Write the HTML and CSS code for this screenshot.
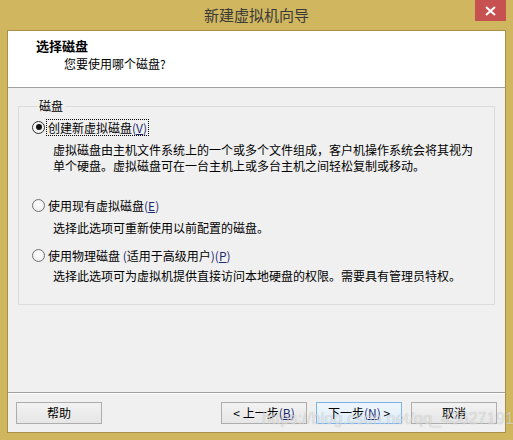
FILE: index.html
```html
<!DOCTYPE html>
<html lang="zh-CN">
<head>
    <meta charset="UTF-8">
    <title>新建虚拟机向导</title>
    <link rel="stylesheet" href="styles.css">
</head>
<body>
    <div class="window">
        <div class="titlebar">
            <span></span>
            <div class="title">新建虚拟机向导</div>
            <div class="close">
                <svg width="11" height="10" viewBox="0 0 11 10"><path d="M1 1 L10 9 M10 1 L1 9" stroke="#fff" stroke-width="2"/></svg>
            </div>
        </div>
        <div class="client">
            <div class="header">
                <div class="header-title">选择磁盘</div>
                <div class="header-sub">您要使用哪个磁盘?</div>
            </div>
            <div class="content">
                <fieldset class="group">
                    <legend>磁盘</legend>
                    <div class="option first">
                        <div class="option-row">
                            <span class="radio checked"></span>
                            <span class="label focus">创建新虚拟磁盘<span class="key">(<u>V</u>)</span></span>
                        </div>
                        <div class="desc tall">虚拟磁盘由主机文件系统上的一个或多个文件组成，客户机操作系统会将其视为<br>单个硬盘。虚拟磁盘可在一台主机上或多台主机之间轻松复制或移动。</div>
                    </div>
                    <div class="option">
                        <div class="option-row">
                            <span class="radio"></span>
                            <span class="label">使用现有虚拟磁盘<span class="key">(<u>E</u>)</span></span>
                        </div>
                        <div class="desc">选择此选项可重新使用以前配置的磁盘。</div>
                    </div>
                    <div class="option last">
                        <div class="option-row">
                            <span class="radio"></span>
                            <span class="label">使用物理磁盘 <span class="key">(</span>适用于高级用户<span class="key">)(<u>P</u>)</span></span>
                        </div>
                        <div class="desc">选择此选项可为虚拟机提供直接访问本地硬盘的权限。需要具有管理员特权。</div>
                    </div>
                </fieldset>
            </div>
            <div class="footer">
                <button class="btn">帮助</button>
                <div class="spacer"></div>
                <button class="btn">&lt; 上一步<span class="key">(<u>B</u>)</span></button>
                <button class="btn default">下一步<span class="key">(<u>N</u>)</span> &gt;</button>
                <button class="btn">取消</button>
            </div>
        </div>
        <div class="watermark">https://blog.csdn.net/qq_43627191</div>
    </div>
</body>
</html>
```

FILE: styles.css
```css
body {
    margin: 0;
    font-family: "Noto Sans CJK SC", "Microsoft YaHei", sans-serif;
    font-size: 12px;
    color: #000;
}
.window {
    position: relative;
    width: 513px;
    height: 440px;
    background-color: #d0b65e;
    display: flex;
    flex-direction: column;
    overflow: hidden;
}
.titlebar {
    height: 30px;
    display: grid;
    grid-template-columns: 1fr auto 1fr;
    align-items: start;
}
.title {
    font-size: 15px;
    line-height: 30px;
    color: #3a3a3a;
}
.close {
    justify-self: end;
    margin-right: 7px;
    width: 31px;
    height: 21px;
    background-color: #c75050;
    display: flex;
    align-items: center;
    justify-content: center;
}
.client {
    margin: 0 7px 7px 7px;
    border: 1px solid #a89147;
    height: 401px;
    background-color: #f0f0f0;
    display: flex;
    flex-direction: column;
}
.header {
    height: 56px;
    background-color: #fff;
    border-bottom: 1px solid #a0a0a0;
    padding-left: 28px;
    box-sizing: content-box;
}
.header-title {
    font-weight: bold;
    font-size: 13px;
    line-height: 16px;
    margin-top: 7px;
}
.header-sub {
    line-height: 16px;
    margin-top: 2px;
    padding-left: 28px;
}
.content {
    height: 304px;
    padding: 10px 10px 0 10px;
    box-sizing: border-box;
}
.group {
    margin: 0;
    width: 477px;
    height: 207px;
    box-sizing: border-box;
    border: 1px solid #dcdcdc;
    padding: 5px 10px 0 13px;
}
.group legend {
    padding: 0 2px;
    margin-left: 5px;
    line-height: 16px;
}
.option-row {
    display: flex;
    align-items: center;
    height: 16px;
}
.radio {
    width: 11px;
    height: 11px;
    border: 1px solid #707070;
    border-radius: 50%;
    background: radial-gradient(circle at 50% 40%, #ffffff, #e8e8e8);
    display: inline-flex;
    align-items: center;
    justify-content: center;
    margin-right: 2px;
}
.radio.checked {
    border-color: #333;
}
.radio.checked::after {
    content: "";
    width: 6px;
    height: 6px;
    border-radius: 50%;
    background-color: #111;
}
.label {
    line-height: 15px;
    padding: 0 1px;
}
.label.focus {
    outline: 1px dotted #000;
}
.key {
    color: #1e2a6e;
}
.desc {
    padding-left: 21px;
    line-height: 16px;
    margin-top: 7px;
    white-space: nowrap;
}
.desc.tall {
    min-height: 48px;
}
.option {
    margin-top: 7px;
}
.option.first {
    margin-top: 0;
}
.option.last {
    margin-top: 11px;
}
.option.last .desc {
    margin-top: 5px;
}
.footer {
    border-top: 1px solid #a0a0a0;
    box-shadow: inset 0 1px 0 #fff;
    flex: 1;
    display: flex;
    align-items: flex-start;
    padding: 9px 8px 0 8px;
    gap: 9px;
}
.spacer {
    flex: 1;
}
.btn {
    width: 86px;
    height: 22px;
    border: 1px solid #adadad;
    background: linear-gradient(#f2f2f2, #e6e6e6);
    font-family: inherit;
    font-size: 12px;
    color: #000;
    padding: 0;
    line-height: 20px;
}
.btn.default {
    border-color: #7eb4ea;
    background: linear-gradient(#eef6fd, #dfeefb);
}
.watermark {
    position: absolute;
    left: 262px;
    top: 410px;
    font-family: "Liberation Sans", Arial, sans-serif;
    font-size: 16px;
    letter-spacing: 0.2px;
    color: rgba(255, 255, 255, 0.55);
    text-shadow: 0 0 1px rgba(0, 0, 0, 0.25);
    white-space: nowrap;
}
```
